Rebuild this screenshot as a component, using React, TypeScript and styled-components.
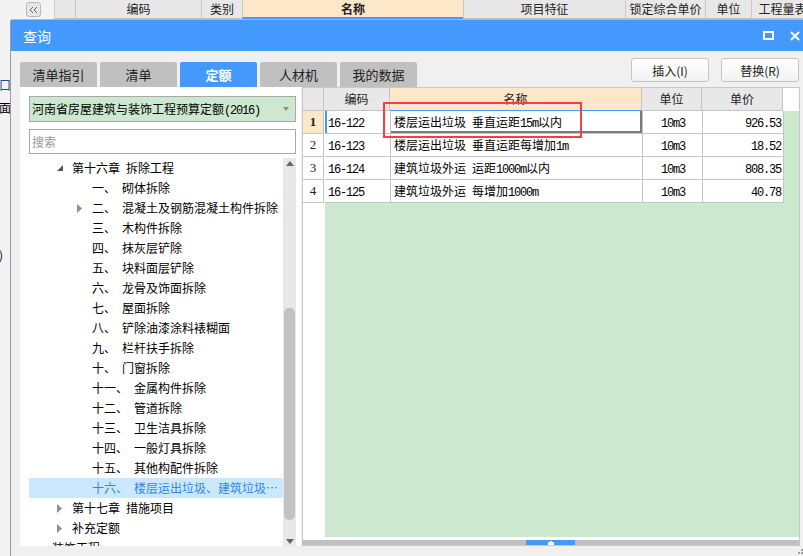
import styled, { createGlobalStyle } from "styled-components";

const BLUE = "#4499ff";
const PEACH = "#fde7c9";
const GREEN = "#cce8cf";
const LINE = "#c4c4c4";

const GlobalStyle = createGlobalStyle`
  html, body {
    margin: 0;
    padding: 0;
    background: #f0f0f0;
  }
  body {
    font-family: "Noto Sans CJK SC", "Noto Sans", sans-serif;
    font-size: 12px;
    color: #000;
  }
  * {
    box-sizing: border-box;
  }
`;

const Page = styled.div`
  width: 803px;
  height: 556px;
  overflow: hidden;
  background: #f0f0f0;
  display: flex;
  flex-direction: column;
`;

/* ---------- grid header behind the dialog ---------- */

const TopGrid = styled.div`
  height: 19px;
  flex-shrink: 0;
  display: flex;
  background: #f3f3f3;
`;

const CollapseZone = styled.div`
  width: 54px;
  flex-shrink: 0;
  padding: 2px 0 0 26px;
`;

const CollapseBtn = styled.div`
  width: 15px;
  height: 15px;
  border: 1px solid #b8b8b8;
  border-radius: 3px;
  background: #e6e6e6;
  display: flex;
  align-items: center;
  justify-content: center;
`;

const GridHead = styled.div<{ $w: number; $active?: boolean }>`
  width: ${(p) => p.$w}px;
  flex-shrink: 0;
  height: 19px;
  border-left: 1px solid #c8c8c8;
  border-bottom: ${(p) => (p.$active ? `2px solid ${BLUE}` : "1px solid #c0c0c0")};
  background: ${(p) => (p.$active ? PEACH : "#e8e8e8")};
  text-align: center;
  line-height: 17px;
  font-size: 12px;
  font-weight: ${(p) => (p.$active ? 700 : 400)};
  color: #222;
  white-space: nowrap;
  overflow: hidden;
`;

/* ---------- main area ---------- */

const Main = styled.div`
  flex: 1;
  display: flex;
  min-height: 0;
`;

const BehindStrip = styled.div`
  width: 10px;
  flex-shrink: 0;
  background: #f3f3f3;
  overflow: hidden;
  display: flex;
  flex-direction: column;
  padding-top: 59px;
`;

const StripText = styled.div<{ $gap: number; $blue?: boolean }>`
  margin-top: ${(p) => p.$gap}px;
  margin-left: -1px;
  line-height: 14px;
  font-size: 12px;
  color: ${(p) => (p.$blue ? "#1b4f9c" : "#000")};
  white-space: nowrap;
`;

const Dialog = styled.div`
  flex: 1;
  min-width: 0;
  display: flex;
  flex-direction: column;
  border-left: 1px solid #9c9c9c;
  border-top: 1px solid #b8b8b8;
  border-top-left-radius: 3px;
  background: #f0f0f0;
`;

const TitleBar = styled.div`
  height: 31px;
  flex-shrink: 0;
  background: ${BLUE};
  display: flex;
  align-items: center;
  padding: 0 3px 0 12px;
  color: #fff;
  font-size: 14px;
`;

const TitleText = styled.span`
  flex: 1;
`;

const TitleIcons = styled.div`
  display: flex;
  align-items: center;
  gap: 16px;
`;

const Body = styled.div`
  flex: 1;
  min-height: 0;
  display: flex;
  flex-direction: column;
  padding: 0 3px 0 9px;
`;

const Toolbar = styled.div`
  height: 36px;
  flex-shrink: 0;
  display: flex;
  align-items: flex-end;
`;

const Tabs = styled.div`
  display: flex;
  gap: 3px;
`;

const Tab = styled.div<{ $active?: boolean }>`
  width: 77px;
  height: 25px;
  border-radius: 2px 2px 0 0;
  background: ${(p) => (p.$active ? BLUE : "#c0c0c0")};
  color: ${(p) => (p.$active ? "#fff" : "#222")};
  font-weight: ${(p) => (p.$active ? 700 : 400)};
  font-size: 13px;
  line-height: 25px;
  text-align: center;
`;

const Actions = styled.div`
  margin-left: auto;
  align-self: flex-start;
  margin-top: 7px;
  margin-right: 1px;
  display: flex;
  gap: 12px;
`;

const ActionButton = styled.button`
  width: 78px;
  height: 24px;
  padding: 0;
  border: 1px solid #c4c4c4;
  border-radius: 3px;
  background: linear-gradient(#ffffff, #f2f2f2);
  font-family: "Noto Sans CJK SC", "Noto Sans", sans-serif;
  font-size: 12px;
  color: #222;
`;

const Panels = styled.div`
  flex: 1;
  min-height: 0;
  display: flex;
  gap: 1px;
`;

/* ---------- left panel: tree ---------- */

const LeftPanel = styled.div`
  width: 281px;
  flex-shrink: 0;
  background: #fff;
  display: flex;
  flex-direction: column;
  padding: 9px 5px 0 9px;
`;

const Dropdown = styled.div`
  height: 26px;
  flex-shrink: 0;
  border: 1px solid #a9a9a9;
  background: ${GREEN};
  display: flex;
  align-items: center;
  padding: 0 6px 0 2px;
  font-size: 12px;
  white-space: nowrap;
`;

const DropdownText = styled.span`
  flex: 1;
`;

const DropArrow = styled.span`
  width: 0;
  height: 0;
  border-left: 3px solid transparent;
  border-right: 3px solid transparent;
  border-top: 4px solid #8a8a8a;
`;

const SearchBox = styled.input`
  margin-top: 7px;
  height: 25px;
  flex-shrink: 0;
  border: 1px solid #a9a9a9;
  background: #fff;
  padding: 0 2px;
  font-family: "Noto Sans CJK SC", "Noto Sans", sans-serif;
  font-size: 12px;
  outline: none;
  &::placeholder {
    color: #999;
  }
`;

const TreeArea = styled.div`
  margin-top: 4px;
  flex: 1;
  min-height: 0;
  display: flex;
  overflow: hidden;
`;

const TreeList = styled.div`
  flex: 1;
  min-width: 0;
  overflow: hidden;
`;

const TreeRow = styled.div<{ $level: number; $selected?: boolean }>`
  height: 20px;
  display: flex;
  align-items: center;
  padding-left: ${(p) => 7 + p.$level * 20}px;
  padding-right: 2px;
  background: ${(p) => (p.$selected ? "#cce8ff" : "transparent")};
  color: ${(p) => (p.$selected ? "#2f86e8" : "#000")};
  font-size: 12px;
  line-height: 20px;
  white-space: nowrap;
`;

const ToggleSlot = styled.span`
  width: 16px;
  flex-shrink: 0;
  display: flex;
  align-items: center;
`;

const NodeLabel = styled.span`
  flex-shrink: 0;
  margin-right: 6px;
`;

const NodeName = styled.span`
  min-width: 0;
  overflow: hidden;
  text-overflow: ellipsis;
`;

const VScroll = styled.div`
  width: 13px;
  flex-shrink: 0;
  background: #e8e8e8;
  display: flex;
  flex-direction: column;
  align-items: center;
`;

const ScrollArrow = styled.div`
  height: 10px;
  flex-shrink: 0;
  display: flex;
  align-items: center;
`;

const VThumb = styled.div`
  width: 11px;
  height: 212px;
  margin-top: 140px;
  border-radius: 5px;
  background: #c2c2c2;
`;

const Spacer = styled.div`
  flex: 1;
`;

/* ---------- right panel: table ---------- */

const RightPanel = styled.div`
  flex: 1;
  min-width: 0;
  position: relative;
  background: #fff;
  border: 1px solid #c8c8c8;
  display: flex;
  flex-direction: column;
`;

const HeadRow = styled.div`
  height: 23px;
  flex-shrink: 0;
  display: flex;
`;

const HeadCell = styled.div<{ $w: number; $active?: boolean }>`
  width: ${(p) => p.$w}px;
  flex-shrink: 0;
  border-right: 1px solid ${LINE};
  border-bottom: 1px solid ${(p) => (p.$active ? BLUE : LINE)};
  background: ${(p) => (p.$active ? PEACH : "#e8e8e8")};
  text-align: center;
  line-height: 22px;
  font-size: 12px;
  color: #222;
`;

const TableBody = styled.div`
  flex: 1;
  min-height: 0;
  display: flex;
`;

const RowHeads = styled.div`
  width: 21px;
  flex-shrink: 0;
  background: #fff;
`;

const RowHead = styled.div<{ $current?: boolean }>`
  height: 23px;
  border-right: 1px solid ${LINE};
  border-bottom: 1px solid ${LINE};
  background: ${(p) => (p.$current ? PEACH : "#fff")};
  font-family: "Liberation Serif", serif;
  font-size: 13px;
  font-weight: ${(p) => (p.$current ? 700 : 400)};
  line-height: 22px;
  text-align: center;
  color: #222;
`;

const DataArea = styled.div`
  flex: 1;
  min-width: 0;
  background: ${GREEN};
  margin-left: 1px;
`;

const DataRow = styled.div`
  height: 23px;
  display: flex;
`;

const Cell = styled.div<{
  $w: number;
  $align?: "left" | "center" | "right";
  $focus?: boolean;
  $current?: boolean;
}>`
  width: ${(p) => p.$w}px;
  flex-shrink: 0;
  background: #fff;
  border-right: 1px solid ${LINE};
  border-bottom: 1px solid ${LINE};
  padding: 0 2px 0 3px;
  text-align: ${(p) => p.$align || "left"};
  line-height: 22px;
  font-size: 12px;
  white-space: nowrap;
  overflow: hidden;
  box-shadow: ${(p) =>
    p.$current
      ? "inset -2px -2px 0 #7a7a7a"
      : p.$focus
      ? `inset 2px 0 0 ${BLUE}`
      : "none"};
`;

const Ascii = styled.span`
  font-family: "Liberation Mono", monospace;
  letter-spacing: -1.2px;
`;

const TableGap = styled.div`
  height: 3px;
  flex-shrink: 0;
  background: #fff;
`;

const HScroll = styled.div`
  height: 5px;
  flex-shrink: 0;
  background: #c0c0c0;
  display: flex;
`;

const HThumb = styled.div`
  width: 49px;
  margin-left: 223px;
  background: ${BLUE};
  display: flex;
  align-items: center;
  justify-content: center;
`;

const RedMark = styled.div`
  position: absolute;
  left: 80px;
  top: 14px;
  width: 199px;
  height: 36px;
  border: 2px solid #ff3b3b;
`;

const Footer = styled.div`
  height: 10px;
  flex-shrink: 0;
  display: flex;
  justify-content: flex-end;
  align-items: flex-end;
  margin-right: -3px;
  padding-bottom: 2px;
`;

/* ---------- data ---------- */

const gridCols = [
  { w: 21, title: "" },
  { w: 126, title: "编码" },
  { w: 41, title: "类别" },
  { w: 221, title: "名称", active: true },
  { w: 162, title: "项目特征" },
  { w: 80, title: "锁定综合单价" },
  { w: 46, title: "单位" },
  { w: 86, title: "工程量表达式" },
];

type TreeItem = {
  level: number;
  toggle?: "open" | "closed";
  label: string;
  name?: string;
  selected?: boolean;
};

const treeItems: TreeItem[] = [
  { level: 1, toggle: "open", label: "第十六章", name: "拆除工程" },
  { level: 2, label: "一、", name: "砌体拆除" },
  { level: 2, toggle: "closed", label: "二、", name: "混凝土及钢筋混凝土构件拆除" },
  { level: 2, label: "三、", name: "木构件拆除" },
  { level: 2, label: "四、", name: "抹灰层铲除" },
  { level: 2, label: "五、", name: "块料面层铲除" },
  { level: 2, label: "六、", name: "龙骨及饰面拆除" },
  { level: 2, label: "七、", name: "屋面拆除" },
  { level: 2, label: "八、", name: "铲除油漆涂料裱糊面" },
  { level: 2, label: "九、", name: "栏杆扶手拆除" },
  { level: 2, label: "十、", name: "门窗拆除" },
  { level: 2, label: "十一、", name: "金属构件拆除" },
  { level: 2, label: "十二、", name: "管道拆除" },
  { level: 2, label: "十三、", name: "卫生洁具拆除" },
  { level: 2, label: "十四、", name: "一般灯具拆除" },
  { level: 2, label: "十五、", name: "其他构配件拆除" },
  { level: 2, label: "十六、", name: "楼层运出垃圾、建筑垃圾外运", selected: true },
  { level: 1, toggle: "closed", label: "第十七章", name: "措施项目" },
  { level: 1, toggle: "closed", label: "补充定额" },
  { level: 0, label: "装饰工程" },
];

const tableCols = [
  { w: 66, title: "编码" },
  { w: 252, title: "名称", active: true },
  { w: 60, title: "单位" },
  { w: 81, title: "单价" },
];

const rows = [
  { code: "16-122", name: "楼层运出垃圾 垂直运距15m以内", unit: "10m3", price: "926.53" },
  { code: "16-123", name: "楼层运出垃圾 垂直运距每增加1m", unit: "10m3", price: "18.52" },
  { code: "16-124", name: "建筑垃圾外运 运距1000m以内", unit: "10m3", price: "808.35" },
  { code: "16-125", name: "建筑垃圾外运 每增加1000m", unit: "10m3", price: "40.78" },
];

// ascii runs get the narrow mono font, like the half-width glyphs of the original
function Mixed({ text }: { text: string }) {
  const parts = text.split(/([\x20-\x7e]+)/).filter(Boolean);
  return (
    <>
      {parts.map((p, i) =>
        /^[\x20-\x7e]+$/.test(p) ? <Ascii key={i}>{p}</Ascii> : <span key={i}>{p}</span>
      )}
    </>
  );
}

function Toggle({ kind }: { kind?: "open" | "closed" }) {
  if (kind === "open") {
    return (
      <svg width="7" height="7" viewBox="0 0 7 7" style={{ marginLeft: 1, marginTop: 1 }}>
        <path d="M6 0 L6 6 L0 6 Z" fill="#555" />
      </svg>
    );
  }
  if (kind === "closed") {
    return (
      <svg width="5" height="9" viewBox="0 0 5 9" style={{ marginLeft: 1 }}>
        <path d="M0 0 L5 4.5 L0 9 Z" fill="#8f8f8f" />
      </svg>
    );
  }
  return null;
}

export default function App() {
  return (
    <>
      <GlobalStyle />
      <Page>
        <TopGrid>
          <CollapseZone>
            <CollapseBtn>
              <svg width="10" height="8" viewBox="0 0 10 8">
                <path d="M4 1 L1 4 L4 7 M8 1 L5 4 L8 7" stroke="#666" strokeWidth="1" fill="none" />
              </svg>
            </CollapseBtn>
          </CollapseZone>
          {gridCols.map((c, i) => (
            <GridHead key={i} $w={c.w} $active={c.active}>
              {c.title}
            </GridHead>
          ))}
        </TopGrid>

        <Main>
          <BehindStrip>
            <StripText $gap={0} $blue>
              口
            </StripText>
            <StripText $gap={9}>面</StripText>
            <StripText $gap={133}>)</StripText>
          </BehindStrip>

          <Dialog>
            <TitleBar>
              <TitleText>查询</TitleText>
              <TitleIcons>
                <svg width="11" height="9" viewBox="0 0 11 9">
                  <rect x="1" y="1" width="9" height="7" stroke="#fff" strokeWidth="2" fill="none" />
                </svg>
                <svg width="10" height="10" viewBox="0 0 10 10">
                  <path d="M1 1 L9 9 M9 1 L1 9" stroke="#fff" strokeWidth="2" />
                </svg>
              </TitleIcons>
            </TitleBar>

            <Body>
              <Toolbar>
                <Tabs>
                  <Tab>清单指引</Tab>
                  <Tab>清单</Tab>
                  <Tab $active>定额</Tab>
                  <Tab>人材机</Tab>
                  <Tab>我的数据</Tab>
                </Tabs>
                <Actions>
                  <ActionButton>插入(I)</ActionButton>
                  <ActionButton>替换(R)</ActionButton>
                </Actions>
              </Toolbar>

              <Panels>
                <LeftPanel>
                  <Dropdown>
                    <DropdownText>
                      <Mixed text="河南省房屋建筑与装饰工程预算定额(2016)" />
                    </DropdownText>
                    <DropArrow />
                  </Dropdown>
                  <SearchBox placeholder="搜索" />
                  <TreeArea>
                    <TreeList>
                      {treeItems.map((t, i) => (
                        <TreeRow key={i} $level={t.level} $selected={t.selected}>
                          <ToggleSlot>
                            <Toggle kind={t.toggle} />
                          </ToggleSlot>
                          <NodeLabel>{t.label}</NodeLabel>
                          {t.name && <NodeName>{t.name}</NodeName>}
                        </TreeRow>
                      ))}
                    </TreeList>
                    <VScroll>
                      <ScrollArrow>
                        <svg width="8" height="5" viewBox="0 0 8 5">
                          <path d="M0 5 L4 0 L8 5 Z" fill="#666" />
                        </svg>
                      </ScrollArrow>
                      <VThumb />
                      <Spacer />
                      <ScrollArrow>
                        <svg width="8" height="5" viewBox="0 0 8 5">
                          <path d="M0 0 L8 0 L4 5 Z" fill="#666" />
                        </svg>
                      </ScrollArrow>
                    </VScroll>
                  </TreeArea>
                </LeftPanel>

                <RightPanel>
                  <HeadRow>
                    <HeadCell $w={21} />
                    {tableCols.map((c) => (
                      <HeadCell key={c.title} $w={c.w} $active={c.active}>
                        {c.title}
                      </HeadCell>
                    ))}
                  </HeadRow>
                  <TableBody>
                    <RowHeads>
                      {rows.map((r, i) => (
                        <RowHead key={r.code} $current={i === 0}>
                          {i + 1}
                        </RowHead>
                      ))}
                    </RowHeads>
                    <DataArea>
                      {rows.map((r, i) => (
                        <DataRow key={r.code}>
                          <Cell $w={66} $focus={i === 0}>
                            <Mixed text={r.code} />
                          </Cell>
                          <Cell $w={252} $current={i === 0}>
                            <Mixed text={r.name} />
                          </Cell>
                          <Cell $w={60} $align="center">
                            <Mixed text={r.unit} />
                          </Cell>
                          <Cell $w={81} $align="right">
                            <Mixed text={r.price} />
                          </Cell>
                        </DataRow>
                      ))}
                    </DataArea>
                  </TableBody>
                  <TableGap />
                  <HScroll>
                    <HThumb>
                      <svg width="6" height="4" viewBox="0 0 6 4">
                        <path d="M2 0 H4 V1 H6 V4 H0 V1 H2 Z" fill="#fff" />
                      </svg>
                    </HThumb>
                  </HScroll>
                  <RedMark />
                </RightPanel>
              </Panels>

              <Footer>
                <svg width="6" height="6" viewBox="0 0 6 6">
                  <rect x="4" y="1" width="2" height="2" fill="#a0a0a0" />
                  <rect x="1" y="4" width="2" height="2" fill="#a0a0a0" />
                  <rect x="4" y="4" width="2" height="2" fill="#a0a0a0" />
                </svg>
              </Footer>
            </Body>
          </Dialog>
        </Main>
      </Page>
    </>
  );
}
